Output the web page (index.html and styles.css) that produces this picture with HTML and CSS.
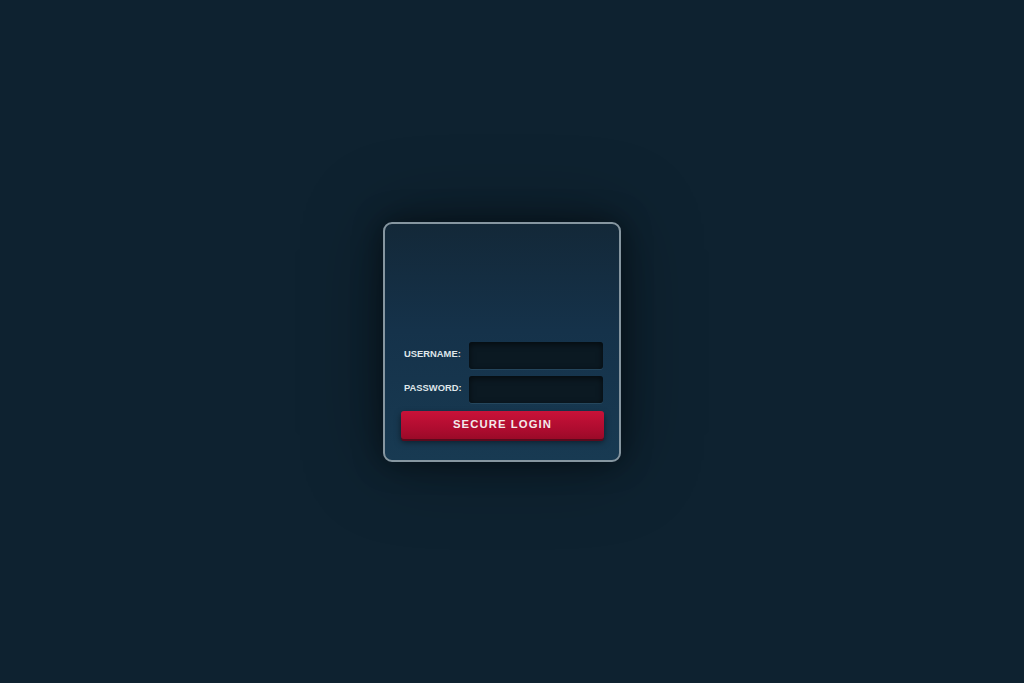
FILE: index.html
```html
<!DOCTYPE html>
<html>
<head>
<meta charset="utf-8">
<link rel="stylesheet" href="styles.css">
</head>
<body>
<div class="stage">
  <form class="card">
    <div class="row">
      <label class="label">USERNAME:</label>
      <div class="field"></div>
    </div>
    <div class="row">
      <label class="label">PASSWORD:</label>
      <div class="field"></div>
    </div>
    <button type="button" class="btn">SECURE LOGIN</button>
  </form>
</div>
</body>
</html>
```
FILE: styles.css
```css
html, body {
  margin: 0;
  height: 100%;
  background: #0e2230;
  font-family: "Liberation Sans", Arial, sans-serif;
}
.stage {
  height: 683px;
  display: flex;
  align-items: center;
  justify-content: center;
}
.card {
  box-sizing: border-box;
  width: 238px;
  height: 240px;
  margin: 0 20px 0 0;
  border: 2px solid #8696a0;
  border-radius: 9px;
  background: linear-gradient(to bottom, #132838 0%, #15324a 45%, #183a52 100%);
  box-shadow: 0 0 30px rgba(0,0,0,0.45), 0 0 80px rgba(0,0,0,0.35);
  display: flex;
  flex-direction: column;
  justify-content: flex-end;
  padding: 0 15px 21px 16px;
}
.row {
  display: flex;
  align-items: center;
  margin: 0 1px 7px 0;
  padding-left: 3px;
}
.label {
  width: 65px;
  color: #dfe6ea;
  font-size: 9.4px;
  font-weight: bold;
  margin-top: -3px;
}
.field {
  flex: 1;
  height: 27px;
  border-radius: 3px;
  background: #0b1922;
  box-shadow: inset 0 2px 6px rgba(0,0,0,0.6), 0 1px 0 rgba(80,120,140,0.25);
}
.btn {
  margin-top: 1px;
  height: 28px;
  border: none;
  border-radius: 3px;
  background: linear-gradient(to bottom, #c81238 0%, #b00c30 60%, #9a0a28 100%);
  box-shadow: 0 2px 0 #5a0a1c, 0 3px 6px rgba(0,0,0,0.5);
  color: #f3e9eb;
  font-family: "Liberation Sans", Arial, sans-serif;
  font-size: 11.3px;
  font-weight: bold;
  letter-spacing: 1.1px;
  padding: 0 0 1px 0;
}
```
